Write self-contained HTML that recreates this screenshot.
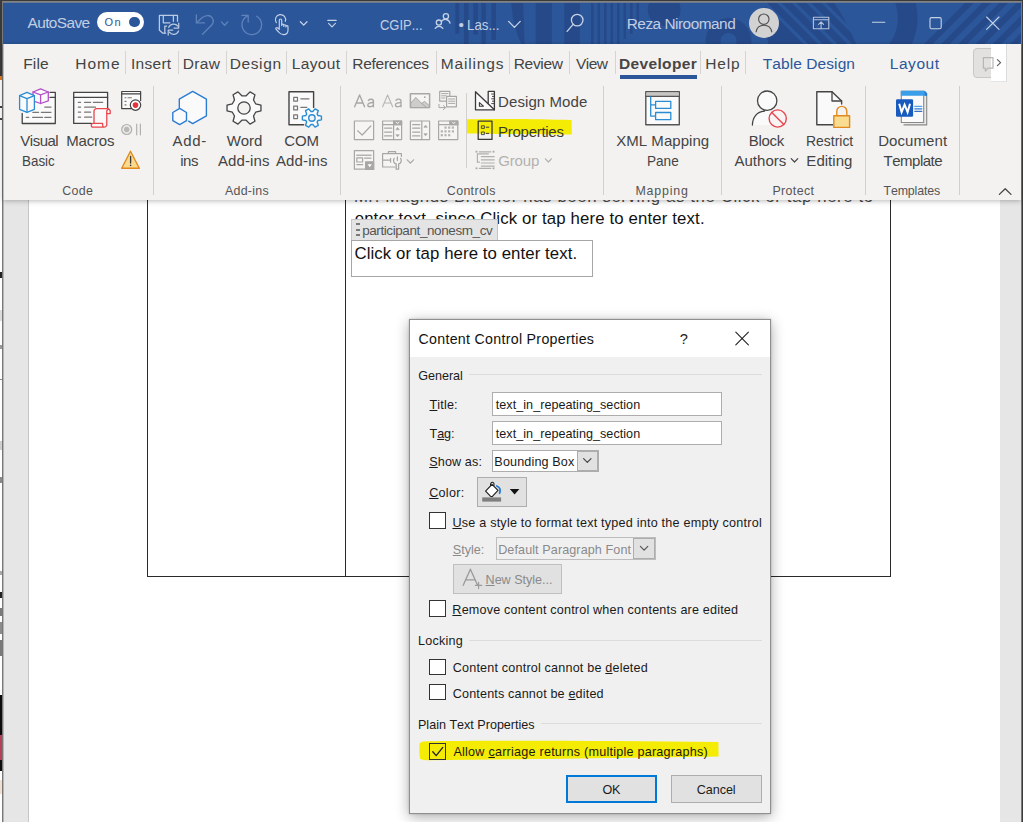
<!DOCTYPE html>
<html lang="en"><head><meta charset="utf-8"><title>Word - Content Control Properties</title>
<style>
html,body{margin:0;padding:0;background:#fff;}
body{width:1023px;height:822px;overflow:hidden;position:relative;font-family:"Liberation Sans",sans-serif;font-kerning:none;}
#app{position:absolute;left:0;top:0;width:1023px;height:822px;overflow:hidden;}
.t{position:absolute;white-space:pre;line-height:24px;height:24px;transform-origin:0 50%;}
.t u{text-decoration:underline;text-underline-offset:1px;text-decoration-thickness:1px;}
.b{position:absolute;box-sizing:border-box;}
svg{position:absolute;left:0;top:0;overflow:visible;}
</style></head><body><div id="app">
<!-- window frame -->
<div class="b" style="left:0px;top:0px;width:1023px;height:822px;background:#ffffff"></div>
<div class="b" style="left:0px;top:0px;width:3px;height:76px;background:#383838"></div>
<div class="b" style="left:0px;top:76px;width:3px;height:4px;background:#e07a1f"></div>
<div class="b" style="left:0px;top:80px;width:3px;height:742px;background:#ffffff"></div>
<div class="b" style="left:0px;top:106px;width:2px;height:2px;background:#444"></div>
<div class="b" style="left:0px;top:117.5px;width:2px;height:2px;background:#444"></div>
<div class="b" style="left:0px;top:272px;width:2px;height:6px;background:#222"></div>
<div class="b" style="left:0px;top:310px;width:2px;height:11px;background:#dcdcdc"></div>
<div class="b" style="left:0px;top:345px;width:2px;height:4px;background:#999"></div>
<div class="b" style="left:0px;top:379px;width:2px;height:1px;background:#888"></div>
<div class="b" style="left:0px;top:441px;width:2px;height:9px;background:#cfcfcf"></div>
<div class="b" style="left:0px;top:477px;width:2px;height:6px;background:#8a8a8a"></div>
<div class="b" style="left:0px;top:571px;width:2px;height:4px;background:#aaa"></div>
<div class="b" style="left:0px;top:592px;width:2px;height:6px;background:#222"></div>
<div class="b" style="left:0px;top:608px;width:2px;height:8px;background:#7a7a7a"></div>
<div class="b" style="left:0px;top:622px;width:2px;height:12px;background:#8c8c8c"></div>
<div class="b" style="left:0px;top:640px;width:2px;height:16px;background:#7a7a7a"></div>
<div class="b" style="left:0px;top:695px;width:3px;height:40px;background:#0c0c0c"></div>
<div class="b" style="left:0px;top:735px;width:3px;height:25px;background:#b8405a"></div>
<div class="b" style="left:0px;top:760px;width:3px;height:11px;background:#0c0c0c"></div>
<div class="b" style="left:0px;top:780px;width:3px;height:14px;background:#f3dfd0"></div>
<div class="b" style="left:2px;top:1px;width:1021px;height:821px;background:#787878"></div>
<div class="b" style="left:0px;top:0px;width:1023px;height:1px;background:#3a3a3a"></div>
<div class="b" style="left:0px;top:1px;width:2px;height:75px;background:#3a3a3a"></div>
<div class="b" style="left:2px;top:1px;width:1020px;height:1px;background:#828282"></div>
<div class="b" style="left:3px;top:2px;width:1018px;height:1px;background:#6b798d"></div>
<div class="b" style="left:1022px;top:0px;width:1px;height:822px;background:#3c3c3c"></div>
<!-- document area -->
<div id="doc">
<div class="b" style="left:3px;top:200px;width:1018px;height:622px;background:#e6e6e6"></div>
<div class="b" style="left:28px;top:200px;width:972px;height:622px;background:#ffffff;border-left:1px solid #c6c6c6"></div>
<div class="b" style="left:147px;top:200px;width:1px;height:377px;background:#2a2a2a"></div>
<div class="b" style="left:345px;top:200px;width:1px;height:377px;background:#2a2a2a"></div>
<div class="b" style="left:890px;top:200px;width:1px;height:377px;background:#2a2a2a"></div>
<div class="b" style="left:147px;top:576px;width:744px;height:1px;background:#2a2a2a"></div>
<span class="t" style="left:354.02px;top:185.00px;font-size:16.8px;color:#4a4a4a;letter-spacing:0.610px">Mr. Magnus Brunner has been serving as the Click or tap here to</span>
<span class="t" style="left:354.69px;top:207.00px;font-size:16.8px;color:#111;letter-spacing:0.135px">enter text. since Click or tap here to enter text.</span>
<div class="b" style="left:351px;top:240px;width:241.5px;height:37px;background:#fff;border:1px solid #a6a6a6"></div>
<span class="t" style="left:354.55px;top:242.00px;font-size:16.8px;color:#111;letter-spacing:0.078px">Click or tap here to enter text.</span>
<div class="b" style="left:351px;top:219px;width:147px;height:21px;background:#e4e4e4;border:1px solid #c4c4c4;border-bottom:none"></div>
<div class="b" style="left:355.6px;top:223px;width:4.2px;height:2.3px;background:#7a7a7a"></div>
<div class="b" style="left:355.6px;top:228.5px;width:4.2px;height:2.3px;background:#7a7a7a"></div>
<div class="b" style="left:355.6px;top:234px;width:4.2px;height:2.3px;background:#7a7a7a"></div>
<span class="t" style="left:362.13px;top:219.00px;font-size:13.5px;color:#555;letter-spacing:-0.411px">participant_nonesm_cv</span>
</div>
<!-- title bar -->
<div id="titlebar">
<div class="b" style="left:3px;top:3px;width:1018px;height:41px;background:#2b579a"></div>
<svg width="1023" height="822" viewBox="0 0 1023 822" fill="none" stroke-linecap="round" stroke-linejoin="round" ><defs><clipPath id="tbclip"><rect x="3" y="3" width="1018" height="41"/></clipPath></defs><g clip-path="url(#tbclip)" fill="#26498a" stroke="none"><rect x="455.3" y="0" width="3.9" height="33.7"/><rect x="463.9" y="0" width="4.7" height="44"/><rect x="473.3" y="0" width="4.7" height="34.5"/><rect x="481.4" y="0" width="4.4" height="44"/><rect x="491.3" y="0" width="4.7" height="40"/><path d="M511 0 C512 18 516 34 521.4 44 L524.6 44 L523 0 Z"/><rect x="535.7" y="0" width="16.1" height="44"/><rect x="564.3" y="0" width="15.5" height="44"/><rect x="591" y="0" width="2.6" height="44"/><rect x="597.5" y="0" width="2.6" height="44"/><rect x="604" y="0" width="2.6" height="44"/><rect x="610.5" y="0" width="2.6" height="44"/><rect x="617" y="0" width="2.6" height="44"/><rect x="623.5" y="0" width="2.6" height="39"/><rect x="630" y="0" width="2.6" height="34"/><rect x="636.5" y="0" width="2.6" height="29"/><circle cx="664.2" cy="9.6" r="16.5"/><path fill-rule="evenodd" d="M705.5 41 a23 23 0 1 0 46 0 a23 23 0 1 0 -46 0 Z M720.5 41 a8 8 0 1 0 16 0 a8 8 0 1 0 -16 0 Z"/><path d="M766.2 0 C764.6 14 765 30 768.4 44 L856 44 C850 28 842 14 832 0 Z"/><g fill="#2b579a"><path d="M759.3 0 L764.2 0 L808.2 44 L803.3 44 Z"/><path d="M774 0 L778.9 0 L822.9 44 L818 44 Z"/><path d="M788.7 0 L793.6 0 L837.6 44 L832.7 44 Z"/><path d="M803.4 0 L808.3 0 L852.3 44 L847.4 44 Z"/><path d="M818.1 0 L823 0 L867 44 L862.1 44 Z"/><path d="M832.8 0 L837.7 0 L881.7 44 L876.8 44 Z"/></g><path d="M886 -36 A62 62 0 0 1 886 72 L876 56 A44 44 0 0 0 876 -20 Z"/><path d="M924 44 L932.6 44 L976.6 0 L968 0 Z"/><path d="M941.2 44 L949.8 44 L993.8 0 L985.2 0 Z"/><path d="M958.4 44 L967 44 L1011 0 L1002.4 0 Z"/><path d="M975.6 44 L984.2 44 L1028.2 0 L1019.6 0 Z"/><path d="M992.8 44 L1001.4 44 L1045.4 0 L1036.8 0 Z"/><path d="M1010 44 L1018.6 44 L1062.6 0 L1054 0 Z"/><path d="M1027.2 44 L1035.8 44 L1079.8 0 L1071.2 0 Z"/></g></svg>
<span class="t" style="left:27.47px;top:11.00px;font-size:15.4px;color:#c2cee3;letter-spacing:-0.581px">AutoSave</span>
<div class="b" style="left:97px;top:12.4px;width:47.4px;height:20px;background:#ffffff;border-radius:10px"></div>
<span class="t" style="left:104.48px;top:10.00px;font-size:11px;color:#2b579a;letter-spacing:1.362px">On</span>
<div class="b" style="left:129.4px;top:17.2px;width:10.2px;height:10.2px;background:#2b579a;border-radius:50%"></div>
<span class="t" style="left:379.54px;top:13.00px;font-size:15.4px;color:#c2cee3;transform:scaleX(0.8427)">CGIP...</span>
<span class="t" style="left:458.39px;top:13.00px;font-size:15.4px;color:#c2cee3;letter-spacing:-0.173px">•</span>
<span class="t" style="left:466.71px;top:13.00px;font-size:15.4px;color:#c2cee3;transform:scaleX(0.8630)">Las...</span>
<span class="t" style="left:626.74px;top:12.00px;font-size:15.4px;color:#c2cee3;letter-spacing:-0.500px">Reza Niroomand</span>
<div class="b" style="left:749px;top:8px;width:30px;height:30px;background:#d2d2d2;border-radius:50%"></div>
<svg width="1023" height="822" viewBox="0 0 1023 822" fill="none" stroke-linecap="round" stroke-linejoin="round" ><g stroke="#bccae2" stroke-width="1.25"><path d="M177.5 21.3 V15.4 H159.4 V30.3 L162.9 33.2 H165.6"/><path d="M163.3 15.4 V22.8 H169.9 M173.4 15.4 V21.3"/><path d="M164.8 33 V26 H166.6"/><path d="M168.7 27.4 A5.2 5.2 0 0 1 177.8 26.2 M178.5 31 A5.2 5.2 0 0 1 169.4 32.2"/><path d="M178.7 23 V28.1 H174 M168.2 35 V30.2 H172.7"/></g><g stroke="#5f82bb" stroke-width="1.3"><path d="M196.4 15 V22.9 H204.5"/><path d="M196.8 22.5 L202 17.8 C205.5 14.8 210 14.8 212 17.6 C214 20.4 213.6 23.2 211 25.8 L202.5 34.2"/><path d="M221.4 21.9 L224.6 25.2 L227.8 21.9"/><path d="M242 15.4 H248.2 V22.1"/><path d="M256.7 16.3 A9.8 9.8 0 1 1 247.7 15.9"/></g><g stroke="#c6d2e6" stroke-width="1.3"><path d="M276.3 22.6 A5.1 5.1 0 1 1 285.3 21.4" stroke-width="1.15"/><path d="M279.3 28.6 V20.2 A1.2 1.2 0 0 1 281.7 20.2 V25.6 M281.7 25.2 A1.05 1.05 0 0 1 283.8 25.2 V26.4 M283.8 25.8 A1.05 1.05 0 0 1 285.9 25.8 V27 M285.9 26.6 A1.05 1.05 0 0 1 288 26.8 V30.2 C288 33 286 34.6 283.4 34.6 C281 34.6 279.8 33.6 278.6 32 L275.8 28.9 C275.4 27.8 276.8 27.2 277.8 28 L279.3 29.4" stroke-width="1.15"/><path d="M300.4 21.8 L303.7 25.1 L307 21.8"/><path d="M327.8 20.4 H336.2 M328.6 23.4 L332 26.8 L335.4 23.4" stroke-width="1.15"/><circle cx="445.9" cy="16.2" r="2.6"/><path d="M441.4 21.4 A4.8 4.8 0 0 1 450 23.2"/><circle cx="438.9" cy="22.6" r="2.6"/><path d="M435.2 28.4 A4.6 4.6 0 0 1 442.8 28.4"/><path d="M508.6 21.4 L514.4 27.4 L520.2 21.4"/><circle cx="577.2" cy="20.1" r="5.8"/><path d="M573.1 24.3 L567.1 31.4"/><path d="M813.4 17.2 H828.8 V28.8 H813.4 Z M813.4 19.7 H828.8 M821.1 28.4 V22 M818.6 24.3 L821.1 21.8 L823.6 24.3" stroke-width="1.1" stroke="#b4c3de"/><path d="M872.4 22.2 H884.8" stroke-width="1.1"/><rect x="930" y="17.6" width="11.2" height="11.2" rx="1.5" stroke-width="1.1"/><path d="M986.6 17 L999 29.4 M999 17 L986.6 29.4" stroke-width="1.1"/></g><g stroke="#505050" stroke-width="1.15"><circle cx="763.8" cy="19.2" r="5.2"/><path d="M756.1 31.9 C756.8 27.4 759.8 25.2 763.9 25.2 C768 25.2 771 27.4 771.8 31.9"/></g></svg>
</div>
<!-- ribbon -->
<div id="ribbon">
<div class="b" style="left:3px;top:44px;width:1018px;height:156px;background:#f3f2f1;box-shadow:0 1px 5px rgba(0,0,0,0.28)"></div>
<span class="t" style="left:23.23px;top:52.00px;font-size:15.5px;color:#444;letter-spacing:0.162px">File</span>
<span class="t" style="left:75.23px;top:52.00px;font-size:15.5px;color:#444;letter-spacing:1.038px">Home</span>
<span class="t" style="left:131.07px;top:52.00px;font-size:15.5px;color:#444;letter-spacing:0.256px">Insert</span>
<span class="t" style="left:182.73px;top:52.00px;font-size:15.5px;color:#444;letter-spacing:0.355px">Draw</span>
<span class="t" style="left:229.73px;top:52.00px;font-size:15.5px;color:#444;letter-spacing:0.606px">Design</span>
<span class="t" style="left:291.73px;top:52.00px;font-size:15.5px;color:#444;letter-spacing:0.369px">Layout</span>
<span class="t" style="left:352.23px;top:52.00px;font-size:15.5px;color:#444;letter-spacing:-0.270px">References</span>
<span class="t" style="left:440.73px;top:52.00px;font-size:15.5px;color:#444;letter-spacing:0.854px">Mailings</span>
<span class="t" style="left:513.73px;top:52.00px;font-size:15.5px;color:#444;letter-spacing:-0.318px">Review</span>
<span class="t" style="left:575.93px;top:52.00px;font-size:15.5px;color:#444;letter-spacing:-0.522px">View</span>
<span class="t" style="left:618.96px;top:52.00px;font-size:15.5px;color:#484644;letter-spacing:0.353px;font-weight:bold">Developer</span>
<span class="t" style="left:705.23px;top:52.00px;font-size:15.5px;color:#444;letter-spacing:0.848px">Help</span>
<span class="t" style="left:762.65px;top:52.00px;font-size:15.5px;color:#2b579a;letter-spacing:0.093px">Table Design</span>
<span class="t" style="left:889.73px;top:52.00px;font-size:15.5px;color:#2b579a;letter-spacing:0.569px">Layout</span>
<div class="b" style="left:620px;top:75px;width:77px;height:3.6px;background:#2b579a"></div>
<div class="b" style="left:125px;top:51px;width:1px;height:23px;background:#d6d4d2"></div>
<div class="b" style="left:177.5px;top:51px;width:1px;height:23px;background:#d6d4d2"></div>
<div class="b" style="left:225.5px;top:51px;width:1px;height:23px;background:#d6d4d2"></div>
<div class="b" style="left:286px;top:51px;width:1px;height:23px;background:#d6d4d2"></div>
<div class="b" style="left:345.5px;top:51px;width:1px;height:23px;background:#d6d4d2"></div>
<div class="b" style="left:435.5px;top:51px;width:1px;height:23px;background:#d6d4d2"></div>
<div class="b" style="left:508.5px;top:51px;width:1px;height:23px;background:#d6d4d2"></div>
<div class="b" style="left:569px;top:51px;width:1px;height:23px;background:#d6d4d2"></div>
<div class="b" style="left:614.5px;top:51px;width:1px;height:23px;background:#d6d4d2"></div>
<div class="b" style="left:699.5px;top:51px;width:1px;height:23px;background:#d6d4d2"></div>
<div class="b" style="left:744.5px;top:51px;width:1px;height:23px;background:#d6d4d2"></div>
<div class="b" style="left:972.5px;top:48px;width:27.5px;height:30px;background:#e3e1df;border:1px solid #c9c7c5;border-radius:4px"></div>
<div class="b" style="left:990.5px;top:44px;width:16.5px;height:37.5px;background:#ffffff;border-right:1px solid #dcdcdc;border-bottom:1px solid #e4e4e4"></div>
<span class="t" style="left:20.33px;top:129.00px;font-size:15px;color:#444;letter-spacing:-0.497px">Visual</span>
<span class="t" style="left:22.30px;top:149.00px;font-size:15px;color:#444;transform:scaleX(0.8929)">Basic</span>
<span class="t" style="left:66.27px;top:129.00px;font-size:15px;color:#444;letter-spacing:-0.200px">Macros</span>
<span class="t" style="left:172.47px;top:129.00px;font-size:15px;color:#444;letter-spacing:0.737px">Add-</span>
<span class="t" style="left:180.30px;top:149.00px;font-size:15px;color:#444;letter-spacing:-0.515px">ins</span>
<span class="t" style="left:226.73px;top:129.00px;font-size:15px;color:#444;letter-spacing:-0.068px">Word</span>
<span class="t" style="left:217.97px;top:149.00px;font-size:15px;color:#444;letter-spacing:0.102px">Add-ins</span>
<span class="t" style="left:284.24px;top:129.00px;font-size:15px;color:#444;letter-spacing:-0.151px">COM</span>
<span class="t" style="left:275.97px;top:149.00px;font-size:15px;color:#444;letter-spacing:0.119px">Add-ins</span>
<span class="t" style="left:616.16px;top:129.00px;font-size:15px;color:#444;letter-spacing:0.045px">XML Mapping</span>
<span class="t" style="left:646.89px;top:149.00px;font-size:15px;color:#444;transform:scaleX(0.9054)">Pane</span>
<span class="t" style="left:748.77px;top:129.00px;font-size:15px;color:#444;letter-spacing:-0.293px">Block</span>
<span class="t" style="left:734.47px;top:149.00px;font-size:15px;color:#444;letter-spacing:0.013px">Authors</span>
<span class="t" style="left:805.56px;top:129.00px;font-size:15px;color:#444;transform:scaleX(0.9293)">Restrict</span>
<span class="t" style="left:806.37px;top:149.00px;font-size:15px;color:#444;letter-spacing:0.022px">Editing</span>
<span class="t" style="left:878.17px;top:129.00px;font-size:15px;color:#444;letter-spacing:0.082px">Document</span>
<span class="t" style="left:883.46px;top:149.00px;font-size:15px;color:#444;letter-spacing:-0.475px">Template</span>
<span class="t" style="left:498.07px;top:90.00px;font-size:15px;color:#444;letter-spacing:0.082px">Design Mode</span>
<svg width="1023" height="822" viewBox="0 0 1023 822"><path d="M466.8 119.2 C500 118.6 540 119 571.6 120 L571.8 134.4 C540 134.6 500 134 466.8 133.6 Z" fill="#f5ec05"/></svg>
<span class="t" style="left:498.07px;top:120.00px;font-size:15px;color:#3a3a2a;letter-spacing:-0.277px">Properties</span>
<span class="t" style="left:498.25px;top:149.00px;font-size:15px;color:#b3b1af;letter-spacing:-0.151px">Group</span>
<span class="t" style="left:62.37px;top:179.00px;font-size:12.4px;color:#555;letter-spacing:0.279px">Code</span>
<span class="t" style="left:224.88px;top:179.00px;font-size:12.4px;color:#555;letter-spacing:0.305px">Add-ins</span>
<span class="t" style="left:446.87px;top:179.00px;font-size:12.4px;color:#555;letter-spacing:0.344px">Controls</span>
<span class="t" style="left:635.48px;top:179.00px;font-size:12.4px;color:#555;letter-spacing:0.825px">Mapping</span>
<span class="t" style="left:772.38px;top:179.00px;font-size:12.4px;color:#555;letter-spacing:0.388px">Protect</span>
<span class="t" style="left:883.52px;top:179.00px;font-size:12.4px;color:#555;letter-spacing:-0.145px">Templates</span>
<div class="b" style="left:153.3px;top:86px;width:1px;height:108.5px;background:#d2d0ce"></div>
<div class="b" style="left:340.1px;top:86px;width:1px;height:108.5px;background:#d2d0ce"></div>
<div class="b" style="left:602.7px;top:86px;width:1px;height:108.5px;background:#d2d0ce"></div>
<div class="b" style="left:720.9px;top:86px;width:1px;height:108.5px;background:#d2d0ce"></div>
<div class="b" style="left:865.4px;top:86px;width:1px;height:108.5px;background:#d2d0ce"></div>
<div class="b" style="left:959.1px;top:86px;width:1px;height:108.5px;background:#d2d0ce"></div>
<div class="b" style="left:465.8px;top:93px;width:1px;height:75px;background:#d2d0ce"></div><svg width="1023" height="822" viewBox="0 0 1023 822" fill="none" stroke-linecap="round" stroke-linejoin="round" ><path d="M983.4 57.6 H993 V68.2 H988 L985.4 71 V68.2 H983.4 Z" stroke="#b8b6b4" stroke-width="1.2"/><path d="M997.4 59.6 L1000.6 62.6 L997.4 65.6" stroke="#5a5a5a" stroke-width="1.1"/><path d="M999.4 194.4 L1005.2 188.8 L1011 194.4" stroke="#444" stroke-width="1.3"/><g stroke="#444444" stroke-width="1.3"><rect x="22.2" y="93" width="33.1" height="30.5" fill="#fafafa" stroke="none"/><path d="M50 92.4 H55.3 V123.5 H22.2 V113.4"/><path d="M50 97.4 H55.3"/></g><g stroke="#797775" stroke-width="1.2"><path d="M44.8 107.2 H51 M32.8 112.3 H38.6 M41.3 112.3 H51 M26.2 117.3 H28.8 M32.5 117.3 H42.6 M44.8 117.3 H51"/></g><g stroke="#b450c8" stroke-width="1.3" fill="#fafafa"><path d="M40.6 88.8 L48.3 92 V100.8 L40.6 103.5 L33 100.8 V92 Z"/><path d="M33 92 L40.6 94.8 L48.3 92 M40.6 94.8 V103.5" fill="none"/></g><g stroke="#2a8dd4" stroke-width="1.3" fill="#fafafa"><path d="M27 92.4 L34.4 95.6 V109.3 L27 112.3 L19.6 109.3 V95.6 Z"/><path d="M19.6 95.6 L27 98.7 L34.4 95.6 M27 98.7 V112.3" fill="none"/></g><g stroke="#444444" stroke-width="1.3"><rect x="73.7" y="92.3" width="33.9" height="31.1" fill="#fafafa" stroke="none"/><path d="M91.4 123.4 H73.7 V92.3 H107.6 V108.4"/><path d="M73.7 97.3 H107.6"/></g><g stroke="#797775" stroke-width="1.2"><path d="M78.3 102.4 H80.6 M84.6 102.4 H90.6"/><path d="M78.3 107.2 H80.6 M84.6 107.2 H95.5"/><path d="M78.3 112.2 H80.6 M84.6 112.2 H90.6"/><path d="M78.3 117.2 H80.6 M84.6 117.2 H91.7"/><path d="M93.4 102.4 H102.7"/></g><g stroke="#e8454d" stroke-width="1.3" fill="#fafafa"><path d="M94 123.4 V111.2 A2.6 2.6 0 0 1 96.6 108.6 H107.4 A2.8 2.8 0 0 1 110.2 111.4 V113.6 H106.8 V124.4 A2.8 2.8 0 0 1 104 127.2 H93.2 A1.9 1.9 0 0 1 93.2 123.4 H102.6 V125.2 A1.9 1.9 0 0 0 104.4 127.1"/><path d="M106.8 113.6 V111.4 A1.7 1.7 0 0 1 108.6 109.4" fill="none"/></g><g stroke="#444444" stroke-width="1.2"><path d="M131 108.6 H121.7 V91.5 H140.6 V100.6" fill="#fafafa"/><path d="M121.7 93.9 H140.6"/></g><path d="M125 97.8 H126 M128 97.8 H131.4 M125 101.4 H126 M125 104.9 H126" stroke="#797775" stroke-width="1.1"/><circle cx="135.5" cy="105.1" r="5.2" stroke="#444444" stroke-width="1.2" fill="#fff"/><circle cx="135.5" cy="105.1" r="2.8" fill="#e8323c" stroke="none"/><circle cx="126.7" cy="129.5" r="5" stroke="#b2b0ae" stroke-width="1.2" fill="#eceae8"/><circle cx="126.7" cy="129.5" r="2.7" fill="#bab8b6" stroke="none"/><path d="M136.7 124.2 V134.8 M140.4 124.2 V134.8" stroke="#b2b0ae" stroke-width="1.2"/><path d="M130.5 151.2 L139.3 168.3 H121.7 Z" stroke="#e08a1e" stroke-width="1.4" fill="#fbd98d"/><path d="M130.6 156.4 V163" stroke="#3a3a3a" stroke-width="1.3"/><circle cx="130.6" cy="165.4" r="0.8" fill="#3a3a3a" stroke="none"/><g stroke="#2b7cd3" stroke-width="1.4" fill="#fafafa"><path d="M179.3 107.4 V99.2 L192.7 91.4 L206.4 99.2 V115.8 L192.7 123.6 L188.6 121.2" /><path d="M179.7 108.4 L186.5 112.5 V120.7 L179.7 124.6 L172.8 120.7 V112.5 Z"/></g><path d="M255.65 103.76 L260.96 105.16 L260.96 110.84 L255.65 112.24 L253.50 115.97 L254.94 121.27 L250.02 124.11 L246.15 120.21 L241.85 120.21 L237.98 124.11 L233.06 121.27 L234.50 115.97 L232.35 112.24 L227.04 110.84 L227.04 105.16 L232.35 103.76 L234.50 100.03 L233.06 94.73 L237.98 91.89 L241.85 95.79 L246.15 95.79 L250.02 91.89 L254.94 94.73 L253.50 100.03 Z" stroke="#444444" stroke-width="1.3" fill="#fafafa"/><circle cx="244" cy="108" r="6.2" stroke="#444444" stroke-width="1.3" fill="#f3f2f1"/><path d="M313.6 107.4 V91.7 H289 V124.7 H303.6" stroke="#444444" stroke-width="1.4" fill="#fafafa"/><g stroke="#797775" stroke-width="1.2"><rect x="293.7" y="97.3" width="3.8" height="3.8"/><rect x="293.7" y="106.1" width="3.8" height="3.8"/><rect x="293.7" y="114.8" width="3.8" height="3.8"/><path d="M300.8 98.8 H309 M300.8 107.3 H306.8"/></g><path d="M318.02 115.53 L321.42 116.15 L321.42 119.85 L318.02 120.47 L317.10 122.06 L318.26 125.32 L315.06 127.17 L312.82 124.54 L310.98 124.54 L308.74 127.17 L305.54 125.32 L306.70 122.06 L305.78 120.47 L302.38 119.85 L302.38 116.15 L305.78 115.53 L306.70 113.94 L305.54 110.68 L308.74 108.83 L310.98 111.46 L312.82 111.46 L315.06 108.83 L318.26 110.68 L317.10 113.94 Z" stroke="#2a8dd4" stroke-width="1.4" fill="#fafafa" stroke-linejoin="round"/><circle cx="311.9" cy="118" r="3.2" stroke="#2a8dd4" stroke-width="1.4" fill="#f3f2f1"/><g stroke="#a9a7a5" stroke-width="1.2" fill="none"><path d="M354.6 106.8 L359.6 95 L364.6 106.8 M356.2 103 H363" stroke-width="1.4"/><path d="M368.4 100.4 C369.6 98.8 373.4 98.6 373.4 101.2 V106.8 M373.4 102.6 C370.4 102.4 367.8 103.2 367.8 105 C367.8 107.4 372 107.4 373.4 105" stroke-width="1.4"/><path d="M382.6 106.8 L387.6 95 L392.6 106.8 M384.2 103 H391" stroke-width="1.1" stroke="#b8b6b4"/><path d="M396 100.4 C397.2 98.8 401 98.6 401 101.2 V106.8 M401 102.6 C398 102.4 395.4 103.2 395.4 105 C395.4 107.4 399.6 107.4 401 105" stroke-width="1.3"/><rect x="410.4" y="93.8" width="19.2" height="13.8" fill="#f6f5f4" stroke-width="1.5"/><path d="M410.8 107.2 V103.2 L415.8 97.4 L421.6 103.4 L424.6 101.4 L429.2 105.6 V107.2 Z" fill="#cfcdcb" stroke-width="1"/><path d="M421.6 103.4 L426.4 107.2" stroke-width="1"/><circle cx="424.8" cy="97.2" r="0.9" fill="#a9a7a5" stroke="none"/><path d="M446.4 101.2 H439.7 V91.4 H449.8 V96" fill="#f6f5f4"/><path d="M441.6 93.6 H448 M441.6 95.8 H446.2 M441.6 98 H445" stroke-width="1"/><rect x="446.6" y="96.4" width="9.8" height="10.4" fill="#f6f5f4"/><path d="M448.6 99 H454.6 M448.6 101.2 H454.6 M448.6 103.4 H454.6" stroke-width="1"/><path d="M439 104.4 V107.6 H445.4 M443.4 105.6 L445.6 107.6 L443.4 109.6" stroke-width="1"/><rect x="354.4" y="121" width="19.2" height="18.6" fill="#f6f5f4"/><path d="M357.6 130.8 L362.2 135 L370.8 126"/><rect x="382.6" y="121" width="19" height="18.6" fill="#f6f5f4"/><path d="M382.6 124.6 H401.6 M393.6 121 V139.6"/><rect x="393.6" y="121" width="8" height="3.6" fill="#a9a7a5"/><path d="M396.3 122.2 L397.6 123.6 L398.9 122.2" stroke="#fff" stroke-width="0.9"/><path d="M384.6 128.2 H391.8 M384.6 132.1 H391.8 M384.6 135.9 H391.8"/><path d="M396.2 129.4 L397.6 127.6 L399 129.4 Z M396.2 135 L397.6 136.8 L399 135 Z" fill="#a9a7a5" stroke-width="0.8"/><rect x="410.4" y="121" width="19.2" height="18.6" fill="#f6f5f4"/><path d="M421.8 121 V139.6"/><path d="M412.6 124.7 H419.8 M412.6 128.2 H419.8 M412.6 132.1 H419.8 M412.6 135.9 H419.8"/><path d="M424.2 127 L425.6 125.2 L427 127 Z M424.2 134 L425.6 135.8 L427 134 Z" fill="#a9a7a5" stroke-width="0.8"/><rect x="438.6" y="121" width="19.2" height="18.6" fill="#f6f5f4"/><path d="M438.6 124.6 H457.8"/><rect x="449.8" y="121" width="8" height="3.6" fill="#a9a7a5"/><path d="M452.5 122.2 L453.8 123.6 L455.1 122.2" stroke="#fff" stroke-width="0.9"/><rect x="444.4" y="126.5" width="2.2" height="2.2" fill="#b5b3b1" stroke="none"/><rect x="448.1" y="126.5" width="2.2" height="2.2" fill="#b5b3b1" stroke="none"/><rect x="451.8" y="126.5" width="2.2" height="2.2" fill="#b5b3b1" stroke="none"/><rect x="440.7" y="130.3" width="2.2" height="2.2" fill="#b5b3b1" stroke="none"/><rect x="444.4" y="130.3" width="2.2" height="2.2" fill="#b5b3b1" stroke="none"/><rect x="448.1" y="130.3" width="2.2" height="2.2" fill="#b5b3b1" stroke="none"/><rect x="451.8" y="130.3" width="2.2" height="2.2" fill="#b5b3b1" stroke="none"/><rect x="440.7" y="134.1" width="2.2" height="2.2" fill="#b5b3b1" stroke="none"/><rect x="444.4" y="134.1" width="2.2" height="2.2" fill="#b5b3b1" stroke="none"/><rect x="448.1" y="134.1" width="2.2" height="2.2" fill="#b5b3b1" stroke="none"/><path d="M365.6 169.2 H354.4 V150.6 H373.6 V161.6" fill="#f6f5f4"/><path d="M356.8 155.2 H371" stroke-width="1.6" stroke="#b5b3b1"/><rect x="356.8" y="157.8" width="5.8" height="4.2"/><path d="M364.6 158.2 H371 M356.8 164.6 H362.6" /><rect x="365.6" y="161.8" width="8.2" height="7.6" fill="#a9a7a5"/><path d="M367.6 164.2 H371.8 L369.7 167.2 Z" fill="#fff" stroke="none"/><path d="M395 167 H382.6 V153.6 H401.4 V156.4" fill="#f6f5f4"/><path d="M388.4 153.4 V151.6 H395.6 V153.4 M382.6 160.2 H390.6 M390.6 158.4 V162.2"/><path d="M397.4 157 V160.6 M394.2 158.4 A3.6 3.6 0 0 0 396.2 164 V169.2 H398.6 V164 A3.6 3.6 0 0 0 400.6 158.4" stroke-width="1.3" fill="#f6f5f4"/><path d="M407.2 159.8 L410.4 163.2 L413.6 159.8"/></g><g stroke="#3b3a39" stroke-width="1.3" fill="none"><path d="M488.2 103.6 V91.4 H494.4 V109.8" fill="#fafafa"/><path d="M491.6 94 H494.2 M492.4 96.4 H494.2 M491.6 98.8 H494.2 M492.4 101.2 H494.2 M491.6 103.6 H494.2" stroke-width="0.9"/><path d="M475.5 91.8 V109.8 H494.4 Z" fill="#fafafa"/><path d="M479.4 102.6 V106.2 H483.4 Z" stroke-width="1.1"/><rect x="478.2" y="121.2" width="13.8" height="18.2"/><rect x="481.8" y="125.8" width="2.6" height="2.6" stroke-width="0.9"/><rect x="481.8" y="132" width="2.6" height="2.6" stroke-width="0.9"/><path d="M486.2 127.2 H488.8 M486.2 133.4 H488.8" stroke-width="1"/></g><g stroke="#b2b0ae" stroke-width="1.2" fill="none"><rect x="475.6" y="150.8" width="1.8" height="1.8" fill="#a9a7a5" stroke="none"/><rect x="492.6" y="150.8" width="1.8" height="1.8" fill="#a9a7a5" stroke="none"/><rect x="475.6" y="167.4" width="1.8" height="1.8" fill="#a9a7a5" stroke="none"/><rect x="492.6" y="167.4" width="1.8" height="1.8" fill="#a9a7a5" stroke="none"/><path d="M479.4 151.8 H490.8 M479.4 168.4 H490.8" stroke-dasharray="0"/><path d="M488.4 153.8 H477.4 V162.2 H479.4"/><path d="M481.4 156.6 H494.2 M481.4 159.8 H494.2 M481.4 163 H494.2 M481.4 166.2 H494.2"/><path d="M545.4 158.8 L548.4 162 L551.4 158.8"/></g><rect x="645.8" y="91.7" width="33.5" height="33" fill="#fafafa" stroke="#555" stroke-width="1.4"/><rect x="646.5" y="92.4" width="32.1" height="3.8" fill="#c8c6c4" stroke="none"/><path d="M645.8 96.4 H679.3" stroke="#555" stroke-width="1.3"/><g stroke="#2a8dd4" stroke-width="1.3" fill="#fafafa"><path d="M650.7 97 V116.1 H655.6 M650.7 104.9 H655.6" fill="none"/><rect x="655.6" y="101.4" width="15.2" height="7"/><rect x="655.6" y="112.5" width="15.2" height="7.1"/></g><path d="M752.4 125 C752.6 117 757.4 111.4 764.6 111 H770 C773 113 775 116 776 125 Z" fill="#fafafa" stroke="none"/><path d="M752.4 125 C752.6 117 757.4 111.4 764.6 111" stroke="#444444" stroke-width="1.3"/><circle cx="767.2" cy="100.7" r="9.7" fill="#fafafa" stroke="#444444" stroke-width="1.3"/><circle cx="777.7" cy="118.5" r="8.6" fill="#f8f4f3" stroke="#e8454d" stroke-width="1.4"/><path d="M771.8 112.4 L783.8 124.4" stroke="#e8454d" stroke-width="1.4"/><path d="M791.2 158.6 L794.5 162 L797.8 158.6" stroke="#444444" stroke-width="1.2"/><path d="M832.6 124.8 H816.8 V91.7 H832 L841.6 101 V104" fill="#fafafa" stroke="#444444" stroke-width="1.4"/><path d="M832 91.7 V101 H841.6" stroke="#444444" stroke-width="1.3"/><path d="M836.8 115.6 V111.4 A5 5 0 0 1 846.8 111.4 V115.6" stroke="#e08a1e" stroke-width="1.4"/><rect x="833.8" y="115.8" width="15.8" height="11.6" fill="#f9dc8f" stroke="#e08a1e" stroke-width="1.4"/><path d="M904 124.9 H926.7 V93.4 H924" fill="#e9e9e9" stroke="#8a8886" stroke-width="1.1"/><rect x="901.3" y="91.2" width="22.4" height="31.3" fill="#fafafa" stroke="#8a8886" stroke-width="1.1"/><path d="M900.8 90.7 H924.6 L927 93.2 V95.7 H900.8 Z" fill="#3b9ee8" stroke="none"/><path d="M924.6 90.7 L927 93.2 V95.7 H924.6 Z" fill="#2b7cd3" stroke="none"/><rect x="896" y="99.2" width="17.1" height="17.5" rx="1.3" fill="#185abd" stroke="none"/><path d="M899.2 103.8 L901.6 112.2 L904.6 104.6 L907.6 112.2 L910 103.8" stroke="#fff" stroke-width="2" stroke-linejoin="miter" stroke-linecap="butt"/><path d="M914.8 106.4 H921.8" stroke="#4ea6ea" stroke-width="1.2"/><path d="M914.8 108.8 H921.8" stroke="#2b7cd3" stroke-width="1.3"/><path d="M914.8 111.4 H921.8" stroke="#3a6fc4" stroke-width="1.2"/></svg>
</div>
<div class="b" style="left:3px;top:3px;width:1px;height:819px;background:rgba(80,80,80,0.32)"></div>
<!-- dialog -->
<div id="dialog">
<div class="b" style="left:409px;top:319px;width:362px;height:495px;background:#f0f0f0;border:1px solid #8f8f8f;box-shadow:0 3px 13px rgba(0,0,0,0.33),0 0 2px rgba(0,0,0,0.2)"></div>
<div class="b" style="left:410px;top:320px;width:360px;height:36.5px;background:#ffffff"></div>
<span class="t" style="left:418.48px;top:327.00px;font-size:14.2px;color:#111;letter-spacing:0.301px">Content Control Properties</span>
<span class="t" style="left:679.80px;top:327.00px;font-size:14.6px;color:#222;letter-spacing:0.221px">?</span>
<span class="t" style="left:418.37px;top:364.00px;font-size:12.6px;color:#1a1a1a;letter-spacing:-0.058px">General</span>
<div class="b" style="left:468.6px;top:374px;width:293.4px;height:1px;background:#dcdcdc"></div>
<span class="t" style="left:417.97px;top:629.00px;font-size:12.6px;color:#1a1a1a;letter-spacing:0.236px">Locking</span>
<div class="b" style="left:468.6px;top:639.5px;width:293.4px;height:1px;background:#dcdcdc"></div>
<span class="t" style="left:417.97px;top:713.00px;font-size:12.6px;color:#1a1a1a;letter-spacing:-0.013px">Plain Text Properties</span>
<div class="b" style="left:541px;top:722.8px;width:221px;height:1px;background:#dcdcdc"></div>
<span class="t" style="left:429.52px;top:393.00px;font-size:12.6px;color:#1a1a1a;letter-spacing:0.146px"><u>T</u>itle:</span>
<div class="b" style="left:492.3px;top:392px;width:229.7px;height:24.2px;background:#fff;border:1px solid #adadad"></div>
<span class="t" style="left:495.81px;top:393.00px;font-size:12.6px;color:#1a1a1a;letter-spacing:0.034px">text_in_repeating_section</span>
<span class="t" style="left:429.52px;top:422.00px;font-size:12.6px;color:#1a1a1a;letter-spacing:-0.060px">T<u>a</u>g:</span>
<div class="b" style="left:492.3px;top:421.2px;width:229.7px;height:24px;background:#fff;border:1px solid #adadad"></div>
<span class="t" style="left:495.81px;top:422.00px;font-size:12.6px;color:#1a1a1a;letter-spacing:0.034px">text_in_repeating_section</span>
<span class="t" style="left:429.23px;top:450.00px;font-size:12.6px;color:#1a1a1a;letter-spacing:0.128px"><u>S</u>how as:</span>
<div class="b" style="left:492.3px;top:450px;width:106.3px;height:22px;background:#fff;border:1px solid #adadad"></div>
<div class="b" style="left:576.6px;top:451px;width:21.4px;height:20px;background:#e1e1e1;border:1px solid #adadad"></div>
<span class="t" style="left:494.37px;top:450.00px;font-size:12.6px;color:#1a1a1a;letter-spacing:0.137px">Bounding Box</span>
<span class="t" style="left:429.16px;top:481.00px;font-size:12.6px;color:#1a1a1a;letter-spacing:0.276px"><u>C</u>olor:</span>
<div class="b" style="left:477.4px;top:477px;width:49.4px;height:30px;background:#e1e1e1;border:1px solid #adadad"></div>
<div class="b" style="left:429.4px;top:512.2px;width:16.4px;height:16.4px;background:#fff;border:1px solid #333"></div>
<span class="t" style="left:452.43px;top:511.00px;font-size:12.6px;color:#1a1a1a;letter-spacing:0.218px"><u>U</u>se a style to format text typed into the empty control</span>
<span class="t" style="left:452.83px;top:538.00px;font-size:12.6px;color:#8a8a8a;letter-spacing:-0.038px"><u>S</u>tyle:</span>
<div class="b" style="left:496px;top:537px;width:159.6px;height:23px;background:#f0f0f0;border:1px solid #bdbdbd"></div>
<div class="b" style="left:633px;top:538px;width:22px;height:21px;background:#e1e1e1;border:1px solid #adadad"></div>
<span class="t" style="left:498.17px;top:538.00px;font-size:12.6px;color:#8a8a8a;letter-spacing:0.093px">Default Paragraph Font</span>
<div class="b" style="left:453.4px;top:564px;width:108.4px;height:30px;background:#e1e1e1;border:1px solid #bfbfbf"></div>
<span class="t" style="left:485.57px;top:568.00px;font-size:12.6px;color:#8a8a8a;letter-spacing:-0.021px"><u>N</u>ew Style...</span>
<div class="b" style="left:429.4px;top:600.4px;width:16.4px;height:16.4px;background:#fff;border:1px solid #333"></div>
<span class="t" style="left:452.37px;top:598.00px;font-size:12.6px;color:#1a1a1a;letter-spacing:0.184px"><u>R</u>emove content control when contents are edited</span>
<div class="b" style="left:429.4px;top:658.8px;width:16.4px;height:16.4px;background:#fff;border:1px solid #333"></div>
<span class="t" style="left:452.76px;top:656.00px;font-size:12.6px;color:#1a1a1a;letter-spacing:0.185px">Content control cannot be <u>d</u>eleted</span>
<div class="b" style="left:429.4px;top:683.8px;width:16.4px;height:16.4px;background:#fff;border:1px solid #333"></div>
<span class="t" style="left:452.76px;top:682.00px;font-size:12.6px;color:#1a1a1a;letter-spacing:0.156px">Contents cannot be <u>e</u>dited</span>
<svg width="1023" height="822" viewBox="0 0 1023 822"><path d="M419.6 743.4 C421 741.8 423.4 741.4 426 741.2 C480 740.4 600 740.4 718.4 742 L718.6 756.4 C640 757.4 520 759.4 430 760.2 C424 760.2 421 759.8 420 758.4 C419.2 753 419.2 748 419.6 743.4 Z" fill="#f5ec05"/></svg>
<div class="b" style="left:429.4px;top:743.4px;width:16.4px;height:16.4px;background:#f5ec05;border:1px solid #333"></div>
<span class="t" style="left:453.38px;top:740.00px;font-size:12.6px;color:#1a1a0a;letter-spacing:0.233px">Allow <u>c</u>arriage returns (multiple paragraphs)</span>
<div class="b" style="left:565.8px;top:775.2px;width:91.6px;height:27.8px;background:#e1e1e1;border:2px solid #0078d7"></div>
<span class="t" style="left:602.60px;top:778.00px;font-size:12.6px;color:#1a1a1a;letter-spacing:-0.267px">OK</span>
<div class="b" style="left:670.6px;top:775.2px;width:91.8px;height:27.8px;background:#e1e1e1;border:1px solid #adadad"></div>
<span class="t" style="left:696.76px;top:778.00px;font-size:12.6px;color:#1a1a1a;letter-spacing:-0.068px">Cancel</span>
<svg width="1023" height="822" viewBox="0 0 1023 822" fill="none" stroke-linecap="round" stroke-linejoin="round" ><path d="M735.8 332.2 L748.4 344.8 M748.4 332.2 L735.8 344.8" stroke="#222" stroke-width="1.1"/><path d="M583.6 458.6 L587.3 462.4 L591 458.6" stroke="#444" stroke-width="1.2"/><path d="M640.4 546.4 L644.1 550.2 L647.8 546.4" stroke="#555" stroke-width="1.2"/><path d="M490.6 485.6 C490.2 483.4 491.4 482 492.6 482.2 C493.8 482.4 494.4 483.8 493.8 486" stroke="#222" stroke-width="1.1"/><path d="M485.6 491.2 L492 484.4 L498 490.4 L492.6 496.2 C491.8 496.8 491 496.8 490.4 496.2 Z" stroke="#222" stroke-width="1.2" fill="#fff"/><path d="M496.8 486 C499.6 487.2 500.8 490 499.6 493.2" stroke="#2b7cd3" stroke-width="1.8"/><rect x="482.2" y="497.4" width="18.9" height="4.2" fill="#7f7f7f" stroke="none"/><path d="M509.8 489 H519.4 L514.6 494.6 Z" fill="#111" stroke="none"/><path d="M463.2 585.2 L470.4 569.2 L477.6 585.2 M466 579.8 H474.8" stroke="#9a9a9a" stroke-width="1.3"/><path d="M475.4 585.4 H481.8 M478.6 582.2 V588.6" stroke="#9a9a9a" stroke-width="1.1"/><path d="M432.8 751.8 L436.2 755.6 L442.8 747.4" stroke="#222" stroke-width="1.3"/></svg>
</div>
</div></body></html>
